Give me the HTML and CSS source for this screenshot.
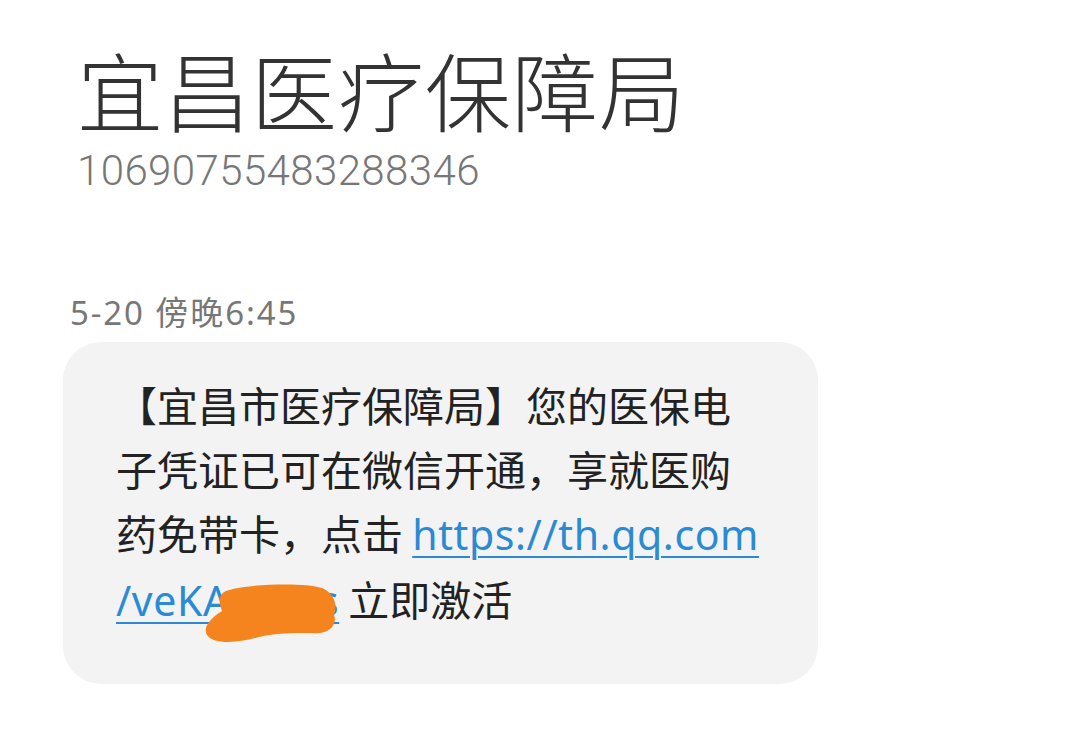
FILE: index.html
```html
<!DOCTYPE html>
<html lang="zh-CN">
<head>
<meta charset="utf-8">
<link rel="stylesheet" href="styles.css">
</head>
<body>
<div class="page">
  <header class="head">
    <h1 class="title">宜昌医疗保障局</h1>
    <div class="number">10690755483288346</div>
  </header>
  <section class="thread">
    <div class="time">5-20 傍晚6:45</div>
    <div class="bubble">
      <p class="msg">【宜昌市医疗保障局】您的医保电<br>子凭证已可在微信开通，享就医购<br>药免带卡，点击 <a class="link" href="#">https://th.qq.com</a><br><span class="redact-wrap"><a class="link" href="#">/veKAxxxxs</a><svg class="redact" width="136" height="62" viewBox="0 0 136 62"><path d="M22 8 C40 1 100 -1 118 5 C130 10 134 22 130 32 C134 42 124 52 108 50 C90 50 70 50 55 54 C35 60 10 62 3 52 C-2 44 8 34 18 28 C14 18 15 11 22 8 Z" fill="#f5841f"/></svg></span> 立即激活</p>
    </div>
  </section>
</div>
</body>
</html>
```
FILE: styles.css
```css
* { box-sizing: border-box; }
html, body { margin: 0; padding: 0; background: #ffffff; }
body {
  width: 1080px;
  height: 737px;
  overflow: hidden;
  font-family: "Noto Sans CJK SC", "Noto Sans", sans-serif;
}
.page {
  padding: 46px 0 0 63px;
}
.head {
  padding-left: 14px;
}
.title {
  margin: 0;
  font-size: 86px;
  line-height: 1;
  font-weight: 300;
  color: #333333;
  letter-spacing: 1px;
}
.number {
  margin-top: 16px;
  font-family: Roboto, "Noto Sans", sans-serif;
  font-weight: 300;
  font-size: 42px;
  line-height: 1.1;
  color: #777777;
  letter-spacing: 0.4px;
}
.thread {
  margin-top: 102px;
}
.time {
  padding-left: 7px;
  font-family: "Noto Sans", "Noto Sans CJK SC", sans-serif;
  font-size: 33px;
  line-height: 1;
  color: #777777;
  letter-spacing: 1.9px;
}
.bubble {
  margin-top: 13px;
  width: 755px;
  height: 342px;
  background: #f3f3f3;
  border-radius: 38px;
  padding: 30px 20px 0 53px;
}
.msg {
  margin: 0;
  font-size: 41px;
  line-height: 64px;
  color: #222222;
  white-space: nowrap;
}
.link {
  color: #2a8ad4;
  text-decoration: underline;
  text-decoration-thickness: 2px;
  text-underline-offset: 6px;
  font-family: "Noto Sans", sans-serif;
  letter-spacing: 0.6px;
}
.redact-wrap {
  position: relative;
  display: inline-block;
}
.redact {
  position: absolute;
  left: 88px;
  top: 17px;
}
```
